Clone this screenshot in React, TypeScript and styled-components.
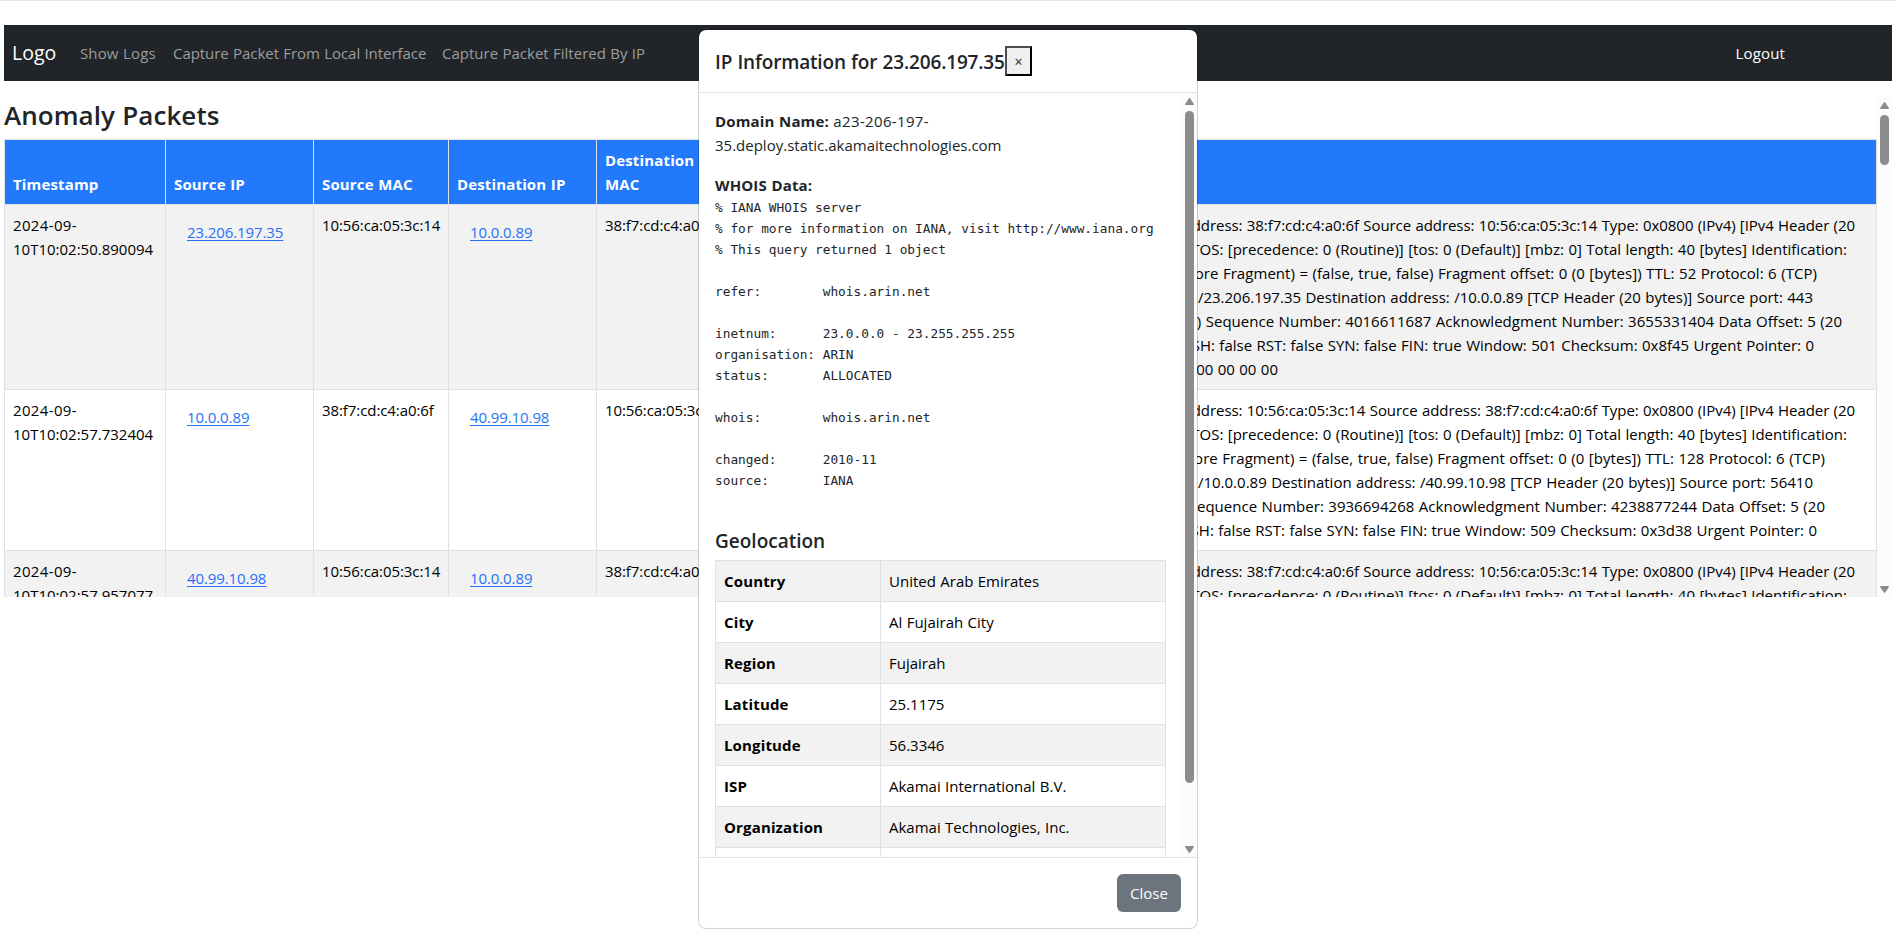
import React from "react";
import styled, { createGlobalStyle } from "styled-components";

const GlobalStyle = createGlobalStyle`
  *, *::before, *::after { box-sizing: border-box; }
  html, body { margin: 0; padding: 0; background: #fff; }
  body {
    height: 945px;
    overflow: hidden;
    font-family: "Open Sans", "Noto Sans", sans-serif;
    font-size: 15px;
    line-height: 24px;
    word-spacing: 0.5px;
    color: #212529;
  }
  h3, h5, p, pre { margin: 0; }
  strong, th { letter-spacing: 0.15px; }
`;

const Page = styled.div`
  display: flex;
  flex-direction: column;
  height: 945px;
  padding: 24px 4px 0;
  border-top: 1px solid #e9e9e9;
`;

const Navbar = styled.nav`
  display: flex;
  align-items: center;
  height: 56px;
  flex: none;
  padding-left: 8px;
  background: #212529;
`;

const Brand = styled.a`
  width: 60px;
  font-size: 19.5px;
  line-height: 30px;
  color: #fff;
`;

const NavItem = styled.a<{ $width: number; $track?: number }>`
  width: ${(p) => p.$width}px;
  padding-left: 8px;
  white-space: nowrap;
  letter-spacing: ${(p) => p.$track ?? 0}px;
  color: #9b9d9f;
`;

const Logout = styled.a`
  margin-left: auto;
  margin-right: 107px;
  letter-spacing: 0.15px;
  color: #fff;
`;

const ScrollArea = styled.section`
  display: flex;
  height: 500px;
  margin-top: 16px;
  overflow: hidden;
`;

const ScrollContent = styled.div`
  flex: 1;
  min-width: 0;
  overflow: hidden;
`;

const Track = styled.div`
  display: flex;
  flex-direction: column;
  align-items: center;
  flex: none;
  width: 15px;
  padding: 5px 0 4px;
  background: #fcfcfc;
`;

const Thumb = styled.div<{ $height: number }>`
  width: 9px;
  height: ${(p) => p.$height}px;
  margin-top: 6px;
  margin-bottom: auto;
  border-radius: 5px;
  background: #8b8b8b;
`;

const Heading = styled.h3`
  height: 42px;
  font-size: 26px;
  font-weight: 600;
  line-height: 36px;
  letter-spacing: 0.05px;
`;

const Table = styled.table`
  width: 1873px;
  table-layout: fixed;
  border-collapse: collapse;
  color: #000;
`;

const Th = styled.th`
  height: 65px;
  padding: 8px;
  border: 1px solid #dee2e6;
  background: #2279fc;
  color: #fff;
  font-weight: 700;
  text-align: left;
  vertical-align: bottom;
`;

const Tr = styled.tr<{ $height: number; $striped?: boolean }>`
  height: ${(p) => p.$height}px;
  background: ${(p) => (p.$striped ? "#f2f2f2" : "#fff")};
`;

const Td = styled.td<{ $track?: number }>`
  padding: 8px;
  border: 1px solid #dee2e6;
  vertical-align: top;
  letter-spacing: ${(p) => p.$track ?? 0}px;
`;

const DatePart = styled.span`
  letter-spacing: 0.35px;
`;

const IpLink = styled.a`
  display: inline-block;
  padding: 7px 13px;
  letter-spacing: -0.1px;
  color: #2770f6;
  text-decoration: underline;
  text-underline-offset: 2px;
`;

const PacketLine = styled.div<{ $inset: number; $track?: number }>`
  margin-right: ${(p) => p.$inset}px;
  text-align: right;
  white-space: nowrap;
  letter-spacing: ${(p) => p.$track ?? 0}px;
`;

const Dialog = styled.div`
  position: absolute;
  top: 29px;
  left: 698px;
  display: flex;
  flex-direction: column;
  width: 500px;
  height: 900px;
  border: 1px solid rgba(0, 0, 0, 0.175);
  border-radius: 8px;
  background: #fff;
  background-clip: padding-box;
`;

const DialogHeader = styled.header`
  display: flex;
  align-items: center;
  height: 63px;
  padding: 16px;
  border-bottom: 1px solid #dee2e6;
`;

const DialogTitle = styled.h5`
  width: 290px;
  padding-top: 2px;
  font-size: 19px;
  font-weight: 600;
  line-height: 30px;
  letter-spacing: -0.16px;
  white-space: nowrap;
`;

const DismissButton = styled.button`
  width: 27px;
  height: 30px;
  padding: 2px 0 0;
  border: 2px outset #000;
  border-color: #4c4c4c #000 #000 #4c4c4c;
  border-radius: 0;
  background: #efefef;
  color: #212529;
  font-family: "Open Sans", sans-serif;
  font-size: 14px;
  line-height: 24px;
`;

const DialogBody = styled.div`
  display: flex;
  height: 764px;
  overflow: hidden;
`;

const DialogContent = styled.div`
  flex: 1;
  min-width: 0;
  padding: 16px;
  overflow: hidden;
`;

const Domain = styled.p`
  margin-bottom: 16px;
`;

const Whois = styled.pre`
  height: 315px;
  margin-bottom: 16px;
  font-family: "DejaVu Sans Mono", monospace;
  font-size: 12.79px;
  line-height: 21px;
  word-spacing: 0;
`;

const SubHeading = styled.h5`
  height: 32px;
  padding-top: 1px;
  font-size: 19px;
  font-weight: 600;
  line-height: 25px;
`;

const GeoTable = styled.table`
  width: 451px;
  table-layout: fixed;
  border-collapse: collapse;
  color: #000;
`;

const GeoRow = styled.tr`
  height: 41px;
  &:nth-child(odd) { background: #f2f2f2; }
  th, td {
    padding: 8px;
    border: 1px solid #dee2e6;
    text-align: left;
  }
`;

const DialogFooter = styled.footer`
  display: flex;
  justify-content: flex-end;
  padding: 16px;
  border-top: 1px solid #dee2e6;
`;

const CloseButton = styled.button`
  width: 64px;
  height: 38px;
  padding: 0;
  border: 0;
  border-radius: 6px;
  background: #6c757d;
  color: #fff;
  font: 15px/24px "Open Sans", sans-serif;
`;

const ArrowIcon = styled.svg`
  display: block;
  flex: none;
`;

const Arrow = ({ down }: { down?: boolean }) => (
  <ArrowIcon width="9" height="7" viewBox="0 0 9 7">
    <path
      d={down ? "M1 0h7q1.400 0 .7 1.200L5.400 6.300q-.9 1.200-1.800 0L.3 1.200Q-.4 0 1 0z" : "M1 7h7q1.400 0 .7-1.200L5.400.7q-.9-1.200-1.800 0L.3 5.800Q-.4 7 1 7z"}
      fill="#8b8b8b"
    />
  </ArrowIcon>
);

const Scrollbar = ({ thumb }: { thumb: number }) => (
  <Track>
    <Arrow />
    <Thumb $height={thumb} />
    <Arrow down />
  </Track>
);

type Line = { text: string; inset: number; track?: number };
type Packet = {
  time: string;
  src: string;
  srcMac: string;
  dst: string;
  dstMac: string;
  height: number;
  lines: Line[];
};

const packets: Packet[] = [
  {
    time: "10T10:02:50.890094",
    src: "23.206.197.35",
    srcMac: "10:56:ca:05:3c:14",
    dst: "10.0.0.89",
    dstMac: "38:f7:cd:c4:a0:6f",
    height: 185,
    lines: [
      { text: "address: 38:f7:cd:c4:a0:6f Source address: 10:56:ca:05:3c:14 Type: 0x0800 (IPv4) [IPv4 Header (20", inset: 13, track: -0.06 },
      { text: "TOS: [precedence: 0 (Routine)] [tos: 0 (Default)] [mbz: 0] Total length: 40 [bytes] Identification:", inset: 21 },
      { text: "More Fragment) = (false, true, false) Fragment offset: 0 (0 [bytes]) TTL: 52 Protocol: 6 (TCP)", inset: 51, track: 0.05 },
      { text: "/23.206.197.35 Destination address: /10.0.0.89 [TCP Header (20 bytes)] Source port: 443", inset: 55 },
      { text: ") Sequence Number: 4016611687 Acknowledgment Number: 3655331404 Data Offset: 5 (20", inset: 26, track: 0.03 },
      { text: "PSH: false RST: false SYN: false FIN: true Window: 501 Checksum: 0x8f45 Urgent Pointer: 0", inset: 54 },
      { text: "00 00 00 00 00", inset: 590 },
    ],
  },
  {
    time: "10T10:02:57.732404",
    src: "10.0.0.89",
    srcMac: "38:f7:cd:c4:a0:6f",
    dst: "40.99.10.98",
    dstMac: "10:56:ca:05:3c:14",
    height: 161,
    lines: [
      { text: "address: 10:56:ca:05:3c:14 Source address: 38:f7:cd:c4:a0:6f Type: 0x0800 (IPv4) [IPv4 Header (20", inset: 13, track: -0.06 },
      { text: "TOS: [precedence: 0 (Routine)] [tos: 0 (Default)] [mbz: 0] Total length: 40 [bytes] Identification:", inset: 21 },
      { text: "More Fragment) = (false, true, false) Fragment offset: 0 (0 [bytes]) TTL: 128 Protocol: 6 (TCP)", inset: 43, track: 0.05 },
      { text: "/10.0.0.89 Destination address: /40.99.10.98 [TCP Header (20 bytes)] Source port: 56410", inset: 55 },
      { text: "Sequence Number: 3936694268 Acknowledgment Number: 4238877244 Data Offset: 5 (20", inset: 43, track: 0.03 },
      { text: "PSH: false RST: false SYN: false FIN: true Window: 509 Checksum: 0x3d38 Urgent Pointer: 0", inset: 51 },
    ],
  },
  {
    time: "10T10:02:57.957077",
    src: "40.99.10.98",
    srcMac: "10:56:ca:05:3c:14",
    dst: "10.0.0.89",
    dstMac: "38:f7:cd:c4:a0:6f",
    height: 161,
    lines: [
      { text: "address: 38:f7:cd:c4:a0:6f Source address: 10:56:ca:05:3c:14 Type: 0x0800 (IPv4) [IPv4 Header (20", inset: 13, track: -0.06 },
      { text: "TOS: [precedence: 0 (Routine)] [tos: 0 (Default)] [mbz: 0] Total length: 40 [bytes] Identification:", inset: 21 },
    ],
  },
];

const whois = `% IANA WHOIS server
% for more information on IANA, visit http://www.iana.org
% This query returned 1 object

refer:        whois.arin.net

inetnum:      23.0.0.0 - 23.255.255.255
organisation: ARIN
status:       ALLOCATED

whois:        whois.arin.net

changed:      2010-11
source:       IANA`;

const geo: [string, string][] = [
  ["Country", "United Arab Emirates"],
  ["City", "Al Fujairah City"],
  ["Region", "Fujairah"],
  ["Latitude", "25.1175"],
  ["Longitude", "56.3346"],
  ["ISP", "Akamai International B.V."],
  ["Organization", "Akamai Technologies, Inc."],
  ["", ""],
];

const Col = styled.col<{ $width?: number }>`
  width: ${(p) => (p.$width ? `${p.$width}px` : "auto")};
`;

export default function App() {
  return (
    <>
      <GlobalStyle />
      <Page>
        <Navbar>
          <Brand>Logo</Brand>
          <NavItem $width={93} $track={0.12}>Show Logs</NavItem>
          <NavItem $width={269} $track={-0.05}>Capture Packet From Local Interface</NavItem>
          <NavItem $width={220}>Capture Packet Filtered By IP</NavItem>
          <Logout>Logout</Logout>
        </Navbar>
        <ScrollArea>
          <ScrollContent>
            <Heading>Anomaly Packets</Heading>
            <Table>
              <colgroup>
                <Col $width={161} />
                <Col $width={148} />
                <Col $width={135} />
                <Col $width={148} />
                <Col $width={135} />
                <Col />
              </colgroup>
              <thead>
                <tr>
                  <Th>Timestamp</Th>
                  <Th>Source IP</Th>
                  <Th>Source MAC</Th>
                  <Th>Destination IP</Th>
                  <Th>Destination MAC</Th>
                  <Th />
                </tr>
              </thead>
              <tbody>
                {packets.map((p, i) => (
                  <Tr key={p.time} $height={p.height} $striped={i % 2 === 0}>
                    <Td>
                      <DatePart>2024-09-</DatePart>
                      <br />
                      {p.time}
                    </Td>
                    <Td><IpLink>{p.src}</IpLink></Td>
                    <Td $track={-0.08}>{p.srcMac}</Td>
                    <Td><IpLink>{p.dst}</IpLink></Td>
                    <Td $track={-0.08}>{p.dstMac}</Td>
                    <Td>
                      {p.lines.map((l) => (
                        <PacketLine key={l.text} $inset={l.inset} $track={l.track}>{l.text}</PacketLine>
                      ))}
                    </Td>
                  </Tr>
                ))}
              </tbody>
            </Table>
          </ScrollContent>
          <Scrollbar thumb={50} />
        </ScrollArea>
      </Page>
      <Dialog>
        <DialogHeader>
          <DialogTitle>IP Information for 23.206.197.35</DialogTitle>
          <DismissButton>×</DismissButton>
        </DialogHeader>
        <DialogBody>
          <DialogContent>
            <Domain>
              <strong>Domain Name:</strong> <DatePart>a23-206-197-</DatePart>
              <br />
              35.deploy.static.akamaitechnologies.com
            </Domain>
            <strong>WHOIS Data:</strong>
            <Whois>{whois}</Whois>
            <SubHeading>Geolocation</SubHeading>
            <GeoTable>
              <colgroup>
                <Col $width={165} />
                <Col />
              </colgroup>
              <tbody>
                {geo.map(([k, v]) => (
                  <GeoRow key={k}>
                    <th>{k}</th>
                    <td>{v}</td>
                  </GeoRow>
                ))}
              </tbody>
            </GeoTable>
          </DialogContent>
          <Scrollbar thumb={672} />
        </DialogBody>
        <DialogFooter>
          <CloseButton>Close</CloseButton>
        </DialogFooter>
      </Dialog>
    </>
  );
}
